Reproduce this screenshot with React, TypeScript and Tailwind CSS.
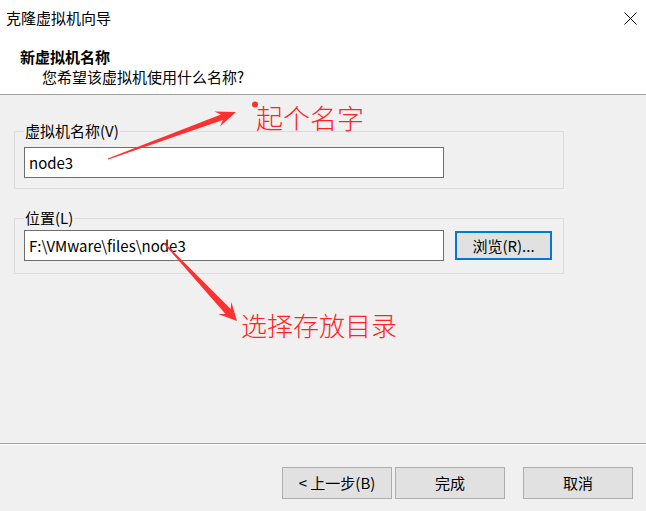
export default function App() {
  return (
    <div className="relative flex h-[511px] w-[646px] flex-col overflow-hidden bg-[#f0f0f0] font-['Noto_Sans_CJK_SC',sans-serif] text-[15px] leading-[20px] text-black">
      <div className="h-[95px] border-b border-[#a0a0a0] bg-white">
        <div className="flex h-[36px] items-center justify-between pl-[6px] pr-[9px]">
          <span>克隆虚拟机向导</span>
          <svg width="13" height="13" viewBox="0 0 13 13" className="text-black">
            <path d="M0.5 0.5 L12.5 12.5 M12.5 0.5 L0.5 12.5" stroke="currentColor" strokeWidth="1" fill="none" />
          </svg>
        </div>
        <div className="mt-[11px] pl-[20px] font-bold">新虚拟机名称</div>
        <div className="pl-[42px]">您希望该虚拟机使用什么名称?</div>
      </div>

      <div className="flex flex-1 flex-col pl-[14px]">
        <fieldset className="mt-[26px] w-[550px] border border-[#dcdcdc] px-[9px] pb-[10px]">
          <legend className="px-[1px] leading-[20px]">虚拟机名称(V)</legend>
          <div className="mt-[6px] flex h-[31px] w-[420px] items-center border border-[#6e6e6e] bg-white px-[4px]">
            node3
          </div>
        </fieldset>

        <fieldset className="mt-[19px] w-[550px] border border-[#dcdcdc] px-[9px] pb-[12px]">
          <legend className="px-[1px] leading-[20px]">位置(L)</legend>
          <div className="mt-[2px] flex items-center gap-[11px]">
            <div className="flex h-[31px] w-[420px] items-center border border-[#6e6e6e] bg-white px-[4px]">
              F:\VMware\files\node3
            </div>
            <button className="flex h-[29px] w-[97px] items-center justify-center border-2 border-[#0078d7] bg-[#e1e1e1]">
              浏览(R)...
            </button>
          </div>
        </fieldset>
      </div>

      <div className="h-[2px] border-t border-[#a0a0a0] bg-white" />
      <div className="flex h-[66px] items-start justify-end pr-[13px] pt-[22px]">
        <button className="flex h-[32px] w-[110px] items-center justify-center border border-[#adadad] bg-[#e1e1e1]">
          &lt; 上一步(B)
        </button>
        <button className="ml-[3px] flex h-[32px] w-[110px] items-center justify-center border border-[#adadad] bg-[#e1e1e1]">
          完成
        </button>
        <button className="ml-[18px] flex h-[32px] w-[110px] items-center justify-center border border-[#adadad] bg-[#e1e1e1]">
          取消
        </button>
      </div>

      <svg className="pointer-events-none absolute left-0 top-0" width="646" height="511" viewBox="0 0 646 511">
        <polygon
          points="107.8,158.5 220.9,114.4 214.4,111.4 236,112 220,126.4 222.9,120 108.2,159.5"
          fill="#ff3030"
        />
        <circle cx="255" cy="104.5" r="3" fill="#ff3030" />
        <polygon
          points="164.4,242.6 230.7,309.1 231.3,301.8 237,321 218.1,314 225.5,313.9 163.6,243.4"
          fill="#ff3030"
        />
      </svg>
      <span className="pointer-events-none absolute left-[256px] top-[104px] text-[27px] font-light leading-[27px] text-[#ff2424]">
        起个名字
      </span>
      <span className="pointer-events-none absolute left-[241px] top-[312px] text-[26px] font-light leading-[26px] text-[#ff2424]">
        选择存放目录
      </span>
    </div>
  );
}
